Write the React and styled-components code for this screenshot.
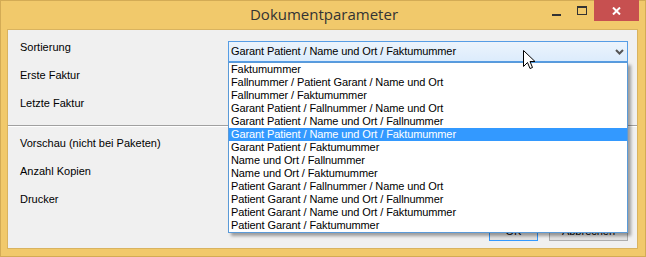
import React from "react";
import styled, { createGlobalStyle } from "styled-components";

const Global = createGlobalStyle`
  html, body { margin: 0; padding: 0; background: #f1c96b; }
  #root { width: 646px; height: 257px; }
`;

const Window = styled.div`
  width: 646px;
  height: 257px;
  box-sizing: border-box;
  background: #f1c96b;
  box-shadow: inset 0 0 0 1px #d3ab55;
  display: flex;
  flex-direction: column;
  overflow: hidden;
`;

const TitleBar = styled.div`
  height: 29px;
  display: grid;
  grid-template-columns: 1fr auto 1fr;
  flex: none;
`;

const Title = styled.div`
  grid-column: 2;
  font-family: "Open Sans", "Noto Sans", sans-serif;
  font-size: 15px;
  line-height: 29px;
  color: #333;
  padding-left: 2px;
`;

const Captions = styled.div`
  grid-column: 3;
  justify-self: end;
  display: flex;
  align-items: flex-start;
  margin-right: 7px;
`;

const CapButton = styled.div`
  width: ${(p) => p.$w}px;
  height: 21px;
  display: flex;
  align-items: center;
  justify-content: center;
  background: ${(p) => (p.$close ? "#c75050" : "transparent")};
`;

const Client = styled.div`
  flex: 1;
  margin: 0 8px 8px 7px;
  border: 1px solid #d9b35f;
  background: #f0f0f0;
  display: flex;
  flex-direction: column;
  padding-top: 4px;
  position: relative;
  font-family: "Liberation Sans", Arial, sans-serif;
  font-size: 11px;
  color: #000;
`;

const Row = styled.div`
  height: 28px;
  display: grid;
  grid-template-columns: 220px 400px;
  align-items: start;
`;

const Label = styled.div`
  padding: 7px 0 0 12px;
  line-height: 13px;
  white-space: nowrap;
`;

const Separator = styled.div`
  margin: 7px 0 3px;
  border-top: 1px solid #a0a0a0;
  border-bottom: 1px solid #ffffff;
`;

const ComboWrap = styled.div`
  position: relative;
  margin-top: 7px;
`;

const Combo = styled.div`
  box-sizing: border-box;
  height: 21px;
  border: 1px solid #569de5;
  background: linear-gradient(#ecf4fc, #dcecfc);
  padding-left: 2px;
  line-height: 19px;
  letter-spacing: -0.1px;
  display: flex;
  justify-content: space-between;
  align-items: center;
`;

const Chevron = styled.svg`
  margin-right: 3px;
`;

const List = styled.div`
  position: absolute;
  left: 0;
  top: 100%;
  width: 400px;
  box-sizing: border-box;
  border: 1px solid #5a9ad8;
  background: #fff;
  box-shadow: 3px 3px 3px rgba(0, 0, 0, 0.35);
  z-index: 2;
`;

const Item = styled.div`
  height: 13px;
  line-height: 13px;
  padding-left: 2px;
  letter-spacing: -0.1px;
  white-space: nowrap;
  background: ${(p) => (p.$selected ? "#3399ff" : "transparent")};
  color: ${(p) => (p.$selected ? "#fff" : "#000")};
`;

const Cursor = styled.svg`
  position: absolute;
  left: 295px;
  top: 9px;
  z-index: 3;
`;

const ButtonRow = styled.div`
  margin-top: 4px;
  display: flex;
  justify-content: flex-end;
  gap: 11px;
  padding-right: 9px;
`;

const Button = styled.div`
  box-sizing: border-box;
  width: ${(p) => p.$w}px;
  height: 23px;
  border: 1px solid ${(p) => (p.$default ? "#3399ff" : "#adadad")};
  background: #e1e1e1;
  text-align: center;
  padding-top: 6px;
  line-height: 13px;
`;

const items = [
  "Faktumummer",
  "Fallnummer / Patient Garant / Name und Ort",
  "Fallnummer / Faktumummer",
  "Garant Patient / Fallnummer / Name und Ort",
  "Garant Patient / Name und Ort / Fallnummer",
  "Garant Patient / Name und Ort / Faktumummer",
  "Garant Patient / Faktumummer",
  "Name und Ort / Fallnummer",
  "Name und Ort / Faktumummer",
  "Patient Garant / Fallnummer / Name und Ort",
  "Patient Garant / Name und Ort / Fallnummer",
  "Patient Garant / Name und Ort / Faktumummer",
  "Patient Garant / Faktumummer",
];

export default function App() {
  const selected = 5;
  return (
    <>
      <Global />
      <Window>
        <TitleBar>
          <Title>Dokumentparameter</Title>
          <Captions>
            <CapButton $w={26}>
              <svg width="9" height="10" viewBox="0 0 9 10">
                <rect x="0" y="8" width="9" height="2" fill="#333" />
              </svg>
            </CapButton>
            <CapButton $w={25}>
              <svg width="10" height="9" viewBox="0 0 10 9">
                <rect x="0.5" y="0.5" width="9" height="8" fill="none" stroke="#333" />
                <rect x="0" y="0" width="10" height="2" fill="#333" />
              </svg>
            </CapButton>
            <CapButton $w={45} $close>
              <svg width="9" height="8" viewBox="0 0 9 8">
                <path d="M1 0.5 L8 7.5 M8 0.5 L1 7.5" stroke="#fff" strokeWidth="2" />
              </svg>
            </CapButton>
          </Captions>
        </TitleBar>
        <Client>
          <Row>
            <Label>Sortierung</Label>
            <ComboWrap>
              <Combo>
                <span>Garant Patient / Name und Ort / Faktumummer</span>
                <Chevron width="9" height="6" viewBox="0 0 9 6">
                  <path d="M1 1 L4.5 4.5 L8 1" fill="none" stroke="#555" strokeWidth="2" />
                </Chevron>
              </Combo>
              <List>
                {items.map((t, i) => (
                  <Item key={i} $selected={i === selected}>
                    {t}
                  </Item>
                ))}
              </List>
              <Cursor width="13" height="20" viewBox="0 0 13 20">
                <path
                  d="M0.5 0.5 L0.5 16.5 L4.5 12.5 L7 18.5 L9.5 17.5 L7 11.5 L12 11.5 Z"
                  fill="#fff"
                  stroke="#000"
                  strokeWidth="1"
                  strokeLinejoin="miter"
                />
              </Cursor>
            </ComboWrap>
          </Row>
          <Row>
            <Label>Erste Faktur</Label>
          </Row>
          <Row>
            <Label>Letzte Faktur</Label>
          </Row>
          <Separator />
          <Row>
            <Label>Vorschau (nicht bei Paketen)</Label>
          </Row>
          <Row>
            <Label>Anzahl Kopien</Label>
          </Row>
          <Row>
            <Label>Drucker</Label>
          </Row>
          <ButtonRow>
            <Button $w={49} $default>OK</Button>
            <Button $w={79}>Abbrechen</Button>
          </ButtonRow>
        </Client>
      </Window>
    </>
  );
}
